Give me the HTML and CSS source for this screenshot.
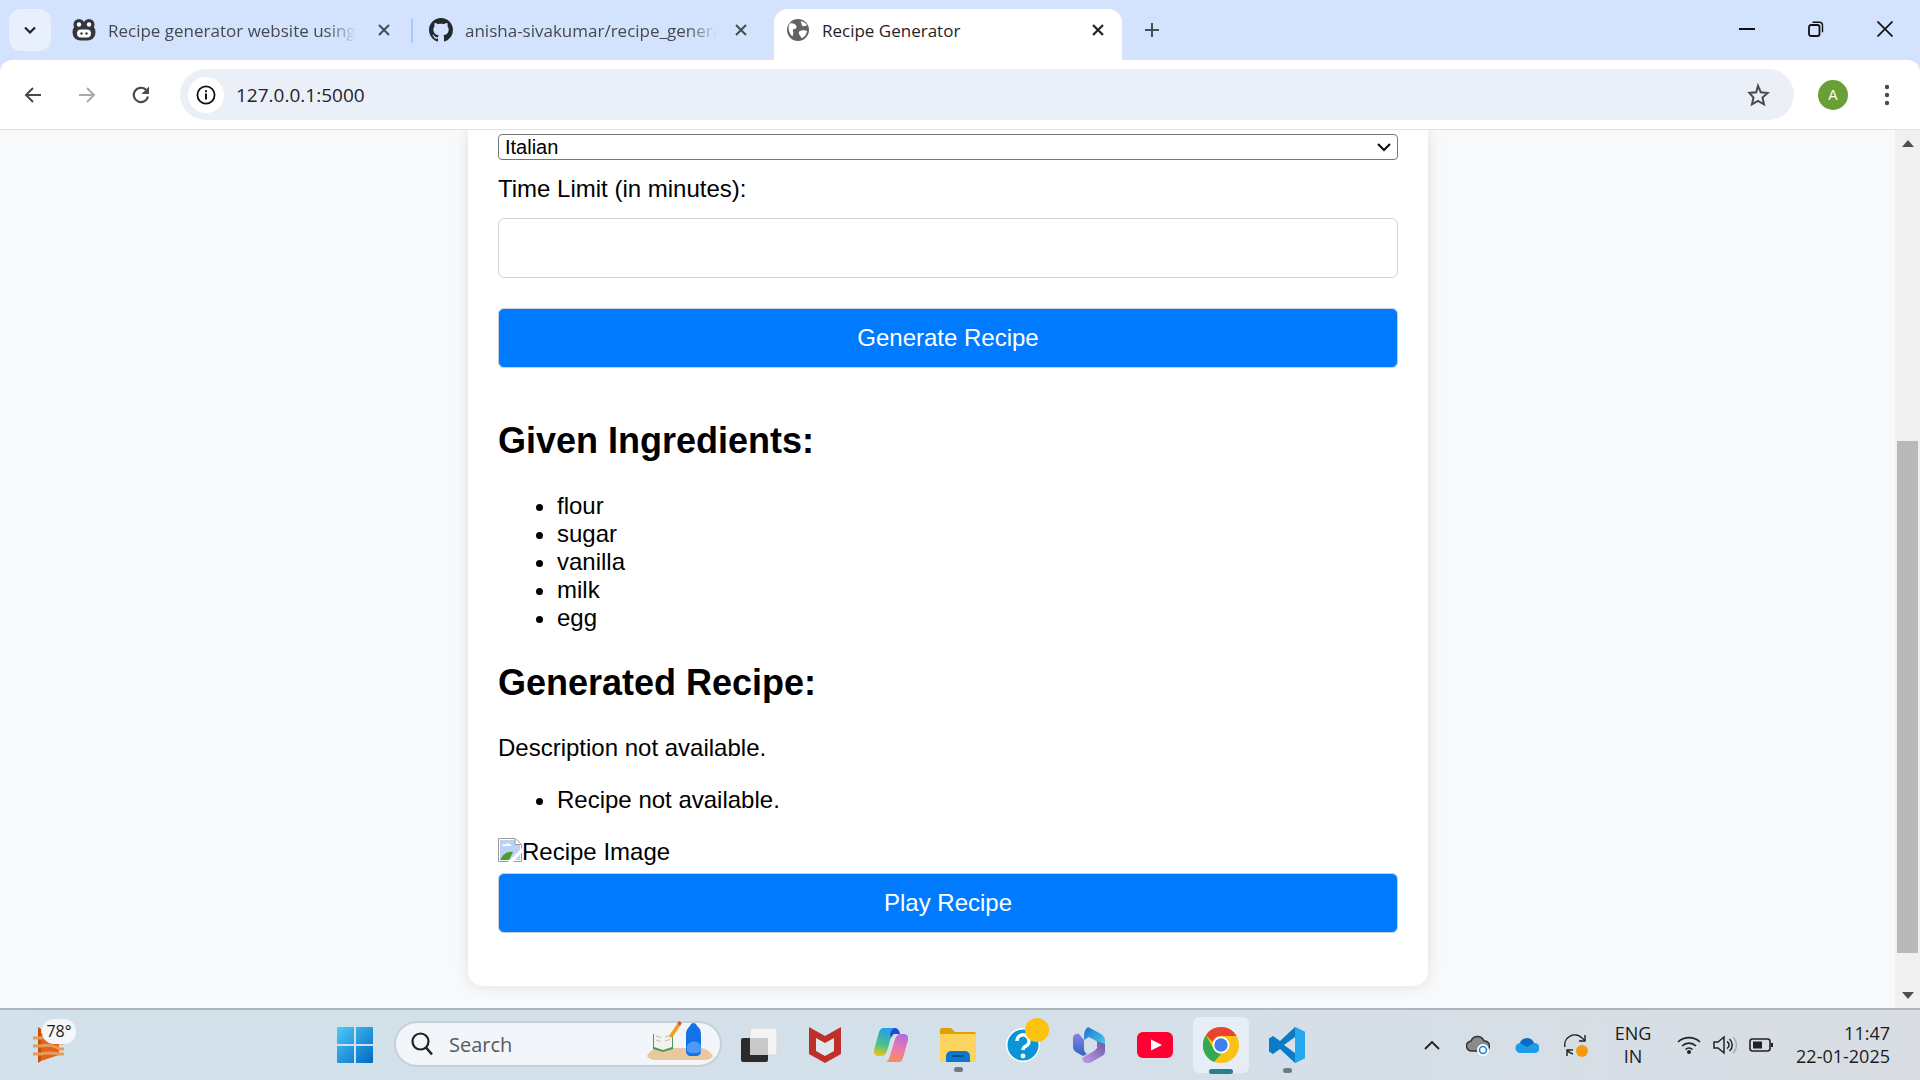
FILE: index.html
```html
<!DOCTYPE html>
<html lang="en">
<head>
  <meta charset="UTF-8" />
  <title>Recipe Generator</title>
  <link rel="stylesheet" href="styles.css">
</head>
<body>
  <div class="tabstrip">
    <div class="tab-search">
      <svg viewBox="0 0 16 16" width="16" height="16"><path d="M3 5.500l5 5 5-5" fill="none" stroke="#1f2328" stroke-width="2.200"/></svg>
    </div>
    <div class="tab tab-one">
      <svg class="favicon" viewBox="0 0 24 24"><circle cx="7" cy="6.500" r="5.500" fill="#34383e"/><circle cx="17" cy="6.500" r="5.500" fill="#34383e"/><rect x="0.500" y="6" width="23" height="16.500" rx="8" fill="#34383e"/><circle cx="7" cy="6.500" r="2.200" fill="#fff"/><circle cx="17" cy="6.500" r="2.200" fill="#fff"/><rect x="5" y="11.500" width="14" height="8" rx="4" fill="#fff"/><circle cx="9.500" cy="15.500" r="1.200" fill="#34383e"/><circle cx="14.500" cy="15.500" r="1.200" fill="#34383e"/></svg>
      <span class="tab-title fade">Recipe generator website using</span>
      <svg class="tab-close" viewBox="0 0 14 14"><path d="M2 2l10 10M12 2L2 12" stroke="#474b50" stroke-width="2"/></svg>
    </div>
    <div class="tab-sep"></div>
    <div class="tab tab-two">
      <svg class="favicon" viewBox="0 0 16 16"><path fill="#24292f" d="M8 0C3.580 0 0 3.580 0 8c0 3.540 2.290 6.530 5.470 7.590.4.070.55-.17.55-.38 0-.19-.01-.82-.01-1.490-2.010.37-2.530-.49-2.690-.94-.09-.23-.48-.94-.82-1.130-.28-.15-.68-.52-.01-.53.63-.01 1.080.58 1.230.82.72 1.210 1.870.87 2.330.66.07-.52.28-.87.51-1.070-1.780-.2-3.640-.89-3.640-3.950 0-.87.31-1.590.82-2.150-.08-.2-.36-1.020.08-2.120 0 0 .67-.21 2.200.82.64-.18 1.320-.27 2-.27s1.360.09 2 .27c1.530-1.040 2.200-.82 2.200-.82.44 1.100.16 1.920.08 2.120.51.56.82 1.270.82 2.150 0 3.070-1.870 3.750-3.650 3.950.29.25.54.73.54 1.480 0 1.070-.01 1.930-.01 2.200 0 .21.15.46.55.38A8.010 8.010 0 0 0 16 8c0-4.420-3.580-8-8-8z"/></svg>
      <span class="tab-title fade">anisha-sivakumar/recipe_genera</span>
      <svg class="tab-close" viewBox="0 0 14 14"><path d="M2 2l10 10M12 2L2 12" stroke="#474b50" stroke-width="2"/></svg>
    </div>
    <div class="tab tab-active">
      <svg class="favicon globe" viewBox="0 0 24 24"><circle cx="12" cy="12" r="12" fill="#5f6368"/><path d="M3 5c3-1 5 0 7 2 1 2 0 4-2 4s-2 2-1 4l-1 4C3 17 0 10 3 5zM15 2c2 1 5 2 7 5l-4 1c-2 0-2-2-3-6zM13 14c3-2 6-2 9-1-1 4-3 7-6 8-1-2-4-5-3-7z" fill="#fff"/></svg>
      <span class="tab-title">Recipe Generator</span>
      <svg class="tab-close" viewBox="0 0 14 14"><path d="M2 2l10 10M12 2L2 12" stroke="#1f2328" stroke-width="2.200"/></svg>
    </div>
    <svg class="new-tab" viewBox="0 0 16 16"><path d="M8 1v14M1 8h14" stroke="#474b50" stroke-width="2"/></svg>
    <div class="win-controls">
      <svg viewBox="0 0 16 16"><path d="M0 8h16" stroke="#111" stroke-width="2"/></svg>
      <svg viewBox="0 0 16 16"><rect x="1" y="4" width="10.500" height="11" rx="2" fill="none" stroke="#111" stroke-width="1.800"/><path d="M4.500 1.200h7a3 3 0 0 1 3 3v7" fill="none" stroke="#111" stroke-width="1.400"/></svg>
      <svg viewBox="0 0 16 16"><path d="M0.500 0.500l15 15M15.500 0.500l-15 15" stroke="#111" stroke-width="1.700"/></svg>
    </div>
  </div>

  <div class="toolbar">
    <svg class="nav-icon" viewBox="0 0 20 20"><path d="M18 10H3M10 3l-7 7 7 7" fill="none" stroke="#474b50" stroke-width="2"/></svg>
    <svg class="nav-icon" viewBox="0 0 20 20"><path d="M2 10h15M10 3l7 7-7 7" fill="none" stroke="#a8abaf" stroke-width="2"/></svg>
    <svg class="nav-icon" viewBox="0 0 20 20"><path d="M17 11.500A7.200 7.200 0 1 1 15 4.800" fill="none" stroke="#474b50" stroke-width="2.200"/><path d="M18 1.500v7.500h-7.500z" fill="#474b50"/></svg>
    <div class="omnibox">
      <div class="site-info">
        <svg viewBox="0 0 20 20" width="20" height="20"><circle cx="10" cy="10" r="8.600" fill="none" stroke="#111" stroke-width="1.800"/><rect x="9" y="8.500" width="2" height="6" fill="#111"/><rect x="9" y="5.200" width="2" height="2" fill="#111"/></svg>
      </div>
      <span class="url">127.0.0.1:5000</span>
      <svg class="star" viewBox="0 0 24 24"><path d="M12 2.800l2.800 6.400 6.900.7-5.200 4.600 1.500 6.800-6-3.500-6 3.500 1.500-6.800L3.300 9.900l6.900-.7z" fill="none" stroke="#474b50" stroke-width="2"/></svg>
    </div>
    <div class="avatar">A</div>
    <svg class="menu-dots" viewBox="0 0 6 24"><circle cx="3" cy="4" r="2.200" fill="#474b50"/><circle cx="3" cy="12" r="2.200" fill="#474b50"/><circle cx="3" cy="20" r="2.200" fill="#474b50"/></svg>
  </div>

  <div class="viewport">
    <main class="page">
      <div class="card">
        <div class="select-wrap">
          <select class="cuisine"><option>Italian</option></select>
          <svg viewBox="0 0 16 16"><path d="M2 5l6 6 6-6" fill="none" stroke="#111" stroke-width="2.200"/></svg>
        </div>
        <label class="field-label">Time Limit (in minutes):</label>
        <input class="field-input" type="text">
        <button class="btn btn-generate">Generate Recipe</button>

        <h2 class="section-title first">Given Ingredients:</h2>
        <ul class="list">
          <li>flour</li>
          <li>sugar</li>
          <li>vanilla</li>
          <li>milk</li>
          <li>egg</li>
        </ul>

        <h2 class="section-title">Generated Recipe:</h2>
        <p class="desc">Description not available.</p>
        <ul class="list list-steps">
          <li>Recipe not available.</li>
        </ul>
        <div class="broken-img">
          <svg viewBox="0 0 24 24" width="24" height="24"><path d="M0.500 0.500h17l6 6v17H0.500z" fill="#fff" stroke="#9c9c9c"/><path d="M2 2h15v5h5v15H2z" fill="#bcd2f5"/><path d="M4 8a2.500 2.500 0 0 1 3.500-1.500 3.500 3.500 0 0 1 6 1.500z" fill="#fff"/><path d="M2 22c3-6 8-9 13-8l-4 8z" fill="#4f9d2f"/><path d="M10 24L24 10v4.500L15 24z" fill="#fff"/><path d="M17 0.500v6h6" fill="#fff" stroke="#9c9c9c"/></svg>
          <span>Recipe Image</span>
        </div>
        <button class="btn">Play Recipe</button>
      </div>
    </main>
    <div class="scrollbar">
      <svg class="arrow" viewBox="0 0 12 8"><path d="M6 0l6 7H0z" fill="#505050"/></svg>
      <div class="track"><div class="thumb"></div></div>
      <svg class="arrow" viewBox="0 0 12 8"><path d="M6 7L0 0h12z" fill="#505050"/></svg>
    </div>
  </div>

  <footer class="taskbar">
    <div class="weather">
      <svg viewBox="0 0 31 36" width="31" height="36"><path d="M5 0l3 2v32l-3 2z" fill="#c9500f"/><path d="M8 6l18 7v15L8 34z" fill="#e0641c"/><path d="M0 11h8c6-2 14 0 19 5h4M0 19h8c6-2 14 0 19 3h4M0 27h8c6-2 12-1 18 0h5" fill="none" stroke="#e89a5a" stroke-width="3"/></svg>
      <span class="temp">78°</span>
    </div>

    <svg class="start" viewBox="0 0 36 36" width="36" height="36">
      <defs>
        <linearGradient id="winGrad" x1="0" y1="0" x2="1" y2="1"><stop offset="0" stop-color="#4cc9f8"/><stop offset="1" stop-color="#0269c4"/></linearGradient>
      </defs>
      <path d="M1 0h16v17H0V1a1 1 0 0 1 1-1zM19 0h16a1 1 0 0 1 1 1v16H19zM0 19h17v17H1a1 1 0 0 1-1-1zM19 19h17v16a1 1 0 0 1-1 1H19z" fill="url(#winGrad)"/>
    </svg>

    <div class="search">
      <svg viewBox="0 0 22 24" width="22" height="24"><circle cx="9.500" cy="9.500" r="8" fill="none" stroke="#222" stroke-width="2.200"/><path d="M15 15.500l6 7" stroke="#222" stroke-width="2.600"/></svg>
      <span class="search-text">Search</span>
      <svg class="search-art" viewBox="0 0 66 40" width="66" height="40"><path d="M0 35c4-7 8-8 14-8h38c6 0 10 2 14 8-3 4-6 4-12 4H12c-6 0-10 0-12-4z" fill="#e8c99b"/><path d="M6 13l10 2 10-3v16l-10 3-10-3z" fill="#4f9a55"/><path d="M7 11l9 2.500L25 10v16l-9 3-9-3z" fill="#f3f3ee"/><path d="M9 15l5 1.500M9 19l5 1.500M18 16l5-1.500M18 20l5-1.500" stroke="#b9bcc0"/><path d="M22 15l8-12 3 2-8 12z" fill="#f0a020"/><path d="M30 3l2-3 3 2-2 3z" fill="#e0503a"/><path d="M39 14c0-5 2-7 4-9 1-4 6-4 7 0 3 2 4 5 4 9v16c0 3-2 5-5 5h-5c-3 0-5-2-5-5z" fill="#1472e8"/><path d="M40 25c2-6 12-6 14 0v5c-3 3-11 3-14 0z" fill="#4b9bf5"/></svg>
    </div>

    <svg class="app app-files" viewBox="0 0 36 34" width="36" height="34"><rect x="9" y="0" width="27" height="27" rx="2" fill="#f4f4f4" stroke="#d5d5d5"/><rect x="0" y="10" width="27" height="24" rx="2" fill="#2b2b2b"/><rect x="9" y="10" width="18" height="17" fill="#c9c9c9"/></svg>

    <svg class="app app-mcafee" viewBox="0 0 32 36" width="32" height="36"><path d="M0 0l16 9 16-9v27l-16 9-16-9z" fill="#c0302b"/><path d="M7 11l9 5 9-5v13l-9 5-9-5z" fill="#dfe6ec"/></svg>

    <svg class="app app-copilot" viewBox="0 0 34 36" width="34" height="36">
      <defs>
        <linearGradient id="copA" x1="0.500" y1="0" x2="0.300" y2="1"><stop offset="0" stop-color="#2a9bea"/><stop offset="0.6" stop-color="#49c28a"/><stop offset="1" stop-color="#f2c21b"/></linearGradient>
        <linearGradient id="copB" x1="0.700" y1="0" x2="0.500" y2="1"><stop offset="0" stop-color="#b26ae0"/><stop offset="0.5" stop-color="#e678b0"/><stop offset="1" stop-color="#f58f5a"/></linearGradient>
      </defs>
      <path d="M25 35H12c2-1 3-3 4-6l5-17c1-3 3-5 6-5h3c3 0 5 3 4 6l-5 18c-1 2-2 4-4 4z" fill="url(#copB)"/>
      <path d="M9 1h13c-2 1-3 3-4 6l-5 17c-1 3-3 5-6 5H4c-3 0-5-3-4-6L5 5c1-2 2-4 4-4z" fill="url(#copA)"/>
      <path d="M20 1c3 0 5 1 6 6h-5c-2 0-3 2-4 4l-1-4c1-3 2-5 4-6z" fill="#1b4fd0"/>
    </svg>

    <div class="app app-explorer">
      <svg viewBox="0 0 36 34" width="36" height="34"><path d="M0 2a2 2 0 0 1 2-2h9l4 4h19a2 2 0 0 1 2 2v4H0z" fill="#e0a000"/><path d="M0 6h36v28H0z" fill="#fdd35f"/><path d="M6 34v-6a5 5 0 0 1 5-5h14a5 5 0 0 1 5 5v6z" fill="#0a78cf"/><rect x="12" y="27" width="12" height="2" fill="#064d8c"/></svg>
      <span class="run-dot"></span>
    </div>

    <div class="app app-help">
      <svg viewBox="0 0 34 36" width="34" height="36"><circle cx="17" cy="18" r="17" fill="#fff"/><circle cx="17" cy="18" r="15.500" fill="#0a96d6"/><path d="M11 14a6 6 0 1 1 9 5c-2 1-3 2-3 4" fill="none" stroke="#fff" stroke-width="3.500"/><circle cx="17" cy="29" r="2.400" fill="#fff"/></svg>
      <span class="help-badge"></span>
    </div>

    <svg class="app app-m365" viewBox="0 0 32 36" width="32" height="36">
      <defs>
        <linearGradient id="msA" x1="0" y1="0" x2="1" y2="1"><stop offset="0" stop-color="#1e6fd0"/><stop offset="1" stop-color="#45d4f0"/></linearGradient>
        <linearGradient id="msB" x1="0" y1="0" x2="0" y2="1"><stop offset="0" stop-color="#8d7fe0"/><stop offset="1" stop-color="#2c66c4"/></linearGradient>
        <linearGradient id="msC" x1="1" y1="0" x2="0" y2="1"><stop offset="0" stop-color="#6d5aa8"/><stop offset="1" stop-color="#c79be8"/></linearGradient>
      </defs>
      <path d="M15 0l13 7c3 2 4 4 4 7v5L16 10l-5 3c0-6 0-10 4-13z" fill="url(#msA)"/>
      <path d="M0 11c0-3 3-5 6-4l5 6v8c0 3 1 5 3 6l-4 2-7-4c-2-1-3-3-3-6z" fill="url(#msB)"/>
      <path d="M32 17v7c0 3-1 4-3 5l-12 7c-3 1-5 0-7-2l-1-3 12-7 3-3v-7z" fill="url(#msC)"/>
    </svg>

    <svg class="app app-yt" viewBox="0 0 36 26" width="36" height="26"><rect width="36" height="26" rx="6" fill="#ff0033"/><path d="M14 7.500l11 5.500-11 5.500z" fill="#fff"/></svg>

    <div class="app app-chrome">
      <svg viewBox="0 0 36 36" width="36" height="36"><circle cx="18" cy="18" r="18" fill="#fbc116"/><path d="M18 0a18 18 0 0 1 15.600 9H18a9 9 0 0 0-8.400 5.700L2.900 8.200A18 18 0 0 1 18 0z" fill="#ea4335"/><path d="M2.900 8.200l7.500 13a9 9 0 0 0 7.600 5.800L11 35A18 18 0 0 1 2.900 8.200z" fill="#34a853"/><circle cx="18" cy="18" r="8.500" fill="#fff"/><circle cx="18" cy="18" r="6.700" fill="#3f7fee"/></svg>
      <span class="run-bar"></span>
    </div>

    <div class="app app-vscode">
      <svg viewBox="0 0 36 36" width="36" height="36"><path d="M26 0l10 5v26l-10 5-15-14-7 5-4-2.500V11.500L4 9l7 5z" fill="#0a7bc4"/><path d="M26 10L15 18l11 8z" fill="#d6e2ec"/><path d="M26 0l10 5v26l-10 5z" fill="#24a9f1"/></svg>
      <span class="run-dot"></span>
    </div>

    <div class="tray">
      <svg class="tray-caret" viewBox="0 0 16 10" width="16" height="10"><path d="M1 9l7-7 7 7" fill="none" stroke="#222" stroke-width="1.800"/></svg>
      <svg viewBox="0 0 24 22" width="24" height="22"><path d="M6 17a5 5 0 0 1-1-10 7 7 0 0 1 13 0 5 5 0 0 1 1 10z" fill="#8a8a8a" stroke="#333" stroke-width="1.500"/><circle cx="17" cy="16" r="6" fill="#fff"/><circle cx="17" cy="16" r="3.500" fill="none" stroke="#1c7ed6" stroke-width="1.500"/></svg>
      <svg viewBox="0 0 24 16" width="24" height="16"><path d="M6 16a5 5 0 0 1-1-10 7.500 7.500 0 0 1 14 0 5 5 0 0 1 1 10z" fill="#1f9bea"/><path d="M5 6a7.500 7.500 0 0 1 14 0l-7 4z" fill="#0a6cc4"/></svg>
      <svg viewBox="0 0 24 24" width="24" height="24"><path d="M1 14a10 10 0 0 1 17-9l3 2.500M3 23v-6h6M3 17a10 10 0 0 0 6 4" fill="none" stroke="#222" stroke-width="1.400"/><path d="M21 2v6h-6" fill="none" stroke="#222" stroke-width="1.400"/><circle cx="18" cy="18" r="6" fill="#f59a0c"/></svg>
      <div class="lang"><span>ENG</span><span>IN</span></div>
      <svg viewBox="0 0 24 18" width="24" height="18"><path d="M1 6a16 16 0 0 1 22 0M5 10a10 10 0 0 1 14 0M8.500 13.500a5 5 0 0 1 7 0" fill="none" stroke="#222" stroke-width="1.600"/><circle cx="12" cy="16" r="2" fill="#222"/></svg>
      <svg class="tray-near" viewBox="0 0 24 20" width="24" height="20"><path d="M1 7h4l6-5v16l-6-5H1z" fill="none" stroke="#222" stroke-width="1.500"/><path d="M14 6.500a4 4 0 0 1 0 7M16.500 4a8 8 0 0 1 0 12" fill="none" stroke="#222" stroke-width="1.500"/><path d="M20 2a11 11 0 0 1 0 16" fill="none" stroke="#aab" stroke-width="1.500"/></svg>
      <svg class="tray-near" viewBox="0 0 24 14" width="24" height="14"><rect x="1" y="1" width="20" height="12" rx="2.500" fill="none" stroke="#222" stroke-width="1.600"/><rect x="4" y="3.500" width="9" height="7" fill="#222"/><rect x="22" y="5" width="2" height="4" fill="#222"/></svg>
      <div class="clock"><span>11:47</span><span>22-01-2025</span></div>
    </div>
  </footer>
</body>
</html>
```

FILE: styles.css
```css
* {
  box-sizing: border-box;
}

html, body {
  margin: 0;
  height: 100%;
}

body {
  width: 1920px;
  height: 1080px;
  display: flex;
  flex-direction: column;
  overflow: hidden;
  font-family: "Liberation Sans", Arial, sans-serif;
  background: #d3e3fd;
}

svg {
  display: block;
  flex: none;
}

/* browser tabs */
.tabstrip {
  height: 60px;
  flex: none;
  display: flex;
  align-items: flex-start;
  background: #d3e3fd;
  font-family: "Open Sans", sans-serif;
}

.tab-search {
  width: 42px;
  height: 42px;
  margin: 9px 0 0 9px;
  display: flex;
  align-items: center;
  justify-content: center;
  background: #e9f0fd;
  border-radius: 12px;
}

.tab {
  height: 51px;
  margin-top: 9px;
  display: flex;
  align-items: center;
  flex: none;
  padding-bottom: 9px;
}

.favicon {
  width: 24px;
  height: 24px;
}

.tab-title {
  font-size: 17px;
  color: #45494e;
  white-space: nowrap;
}

.fade {
  -webkit-mask-image: linear-gradient(to right, #000 88%, transparent);
  mask-image: linear-gradient(to right, #000 88%, transparent);
}

.tab-close {
  width: 14px;
  height: 14px;
}

.tab-one {
  width: 340px;
  margin-left: 21px;
}

.tab-one .tab-title {
  width: 248px;
  margin-left: 12px;
}

.tab-one .tab-close {
  margin-left: 21px;
}

.tab-sep {
  width: 2px;
  height: 24px;
  margin: 19px 0 0 -1px;
  background: #a8c7fa;
}

.tab-two {
  width: 344px;
  margin-left: 16px;
}

.tab-two .tab-title {
  width: 252px;
  margin-left: 12px;
}

.tab-two .tab-close {
  margin-left: 17px;
}

.tab-active {
  width: 348px;
  margin-left: 1px;
  padding-left: 13px;
  background: #fff;
  border-radius: 14px 14px 0 0;
}

.globe {
  width: 22px;
  height: 22px;
}

.tab-active .tab-title {
  width: 269px;
  margin-left: 13px;
  color: #1f2328;
}

.new-tab {
  width: 16px;
  height: 16px;
  margin: 22px 0 0 22px;
}

.win-controls {
  margin: 21px 27px 0 auto;
  display: flex;
  gap: 53px;
}

.win-controls svg {
  width: 16px;
  height: 16px;
}

/* address bar */
.toolbar {
  height: 70px;
  flex: none;
  display: flex;
  align-items: center;
  background: #fff;
  border-radius: 12px 12px 0 0;
  border-bottom: 1px solid #e1e3e6;
  padding-left: 23px;
}

.nav-icon {
  width: 20px;
  height: 20px;
  margin-right: 34px;
}

.nav-icon:nth-child(3) {
  margin-right: 29px;
}

.omnibox {
  width: 1614px;
  height: 51px;
  display: flex;
  align-items: center;
  background: #ebf0f8;
  border-radius: 26px;
  padding: 0 24px 0 8px;
}

.site-info {
  width: 36px;
  height: 36px;
  display: flex;
  align-items: center;
  justify-content: center;
  background: #fff;
  border-radius: 50%;
}

.url {
  margin-left: 12px;
  font-family: "Open Sans", sans-serif;
  font-size: 19px;
  color: #1f2328;
}

.star {
  width: 24px;
  height: 24px;
  margin-left: auto;
}

.avatar {
  width: 30px;
  height: 30px;
  margin-left: 24px;
  border-radius: 50%;
  background: #6a9f37;
  color: #fff;
  font-size: 14px;
  line-height: 30px;
  text-align: center;
}

.menu-dots {
  width: 6px;
  height: 24px;
  margin-left: 36px;
}

/* page */
.viewport {
  flex: 1;
  min-height: 0;
  display: flex;
  background: #f8f9fa;
  border-bottom: 2px solid #aeb6bc;
}

.page {
  flex: 1;
  overflow: hidden;
}

.card {
  width: 960px;
  height: 856px;
  margin-left: 468px;
  padding: 4px 30px 0;
  background: #fff;
  border-radius: 0 0 15px 15px;
  box-shadow: 0 0 15px rgba(0, 0, 0, 0.1);
}

.select-wrap {
  position: relative;
}

.select-wrap svg {
  position: absolute;
  right: 6px;
  top: 5px;
  width: 16px;
  height: 16px;
}

.cuisine {
  display: block;
  width: 100%;
  height: 26px;
  padding: 0 6px;
  appearance: none;
  background: #fff;
  border: 1.5px solid #767676;
  border-radius: 4px;
  font: 20px "Liberation Sans", Arial, sans-serif;
  color: #000;
}

.field-label {
  display: block;
  margin-top: 15px;
  font-size: 24px;
  line-height: 28px;
}

.field-input {
  display: block;
  width: 100%;
  height: 60px;
  margin-top: 15px;
  border: 1.5px solid #ced4da;
  border-radius: 6px;
}

.btn {
  display: block;
  width: 100%;
  height: 60px;
  background: #007bff;
  border: 1px solid #c7d0da;
  border-radius: 6px;
  color: #fff;
  font: 24px "Liberation Sans", Arial, sans-serif;
}

.btn-generate {
  margin-top: 30px;
}

.section-title {
  margin: 30px 0 31px;
  font-size: 36px;
  line-height: 41px;
}

.section-title.first {
  margin-top: 52px;
  margin-bottom: 30px;
}

.list {
  margin: 31px 0 24px;
  padding-left: 59px;
  font-size: 24px;
  line-height: 28px;
}

.desc {
  margin: 0;
  font-size: 24px;
  line-height: 28px;
}

.list-steps {
  margin: 24px 0;
}

.broken-img {
  display: flex;
  align-items: center;
  height: 28px;
  margin-bottom: 7px;
  font-size: 24px;
}

.broken-img svg {
  margin-top: -5px;
}

/* scrollbar */
.scrollbar {
  width: 25px;
  flex: none;
  display: flex;
  flex-direction: column;
  align-items: center;
  background: #f0f0f0;
  padding: 10px 0 8px;
}

.arrow {
  width: 12px;
  height: 8px;
}

.track {
  flex: 1;
  align-self: stretch;
  position: relative;
}

.thumb {
  position: absolute;
  left: 2px;
  right: 2px;
  top: 293px;
  height: 512px;
  background: #b9b9b9;
}

/* windows taskbar */
.taskbar {
  height: 70px;
  flex: none;
  display: flex;
  align-items: center;
  background: linear-gradient(to right, #d2e1eb, #d4dfe9 60%, #d9dde3);
  color: #1b1b1b;
}

.weather {
  position: relative;
  width: 31px;
  height: 36px;
  margin-left: 33px;
}

.temp {
  position: absolute;
  left: 9px;
  top: -8px;
  width: 34px;
  height: 25px;
  background: #f4f6f7;
  border-radius: 12px;
  font: 16px/25px "Open Sans", sans-serif;
  text-align: center;
}

.start {
  margin-left: 273px;
}

.search {
  width: 328px;
  height: 46px;
  margin: -2px 0 0 21px;
  display: flex;
  align-items: center;
  padding: 0 7px 0 15px;
  background: #f2f5f9;
  border: 2px solid #c6d0da;
  border-radius: 23px;
}

.search-text {
  margin-left: 16px;
  font: 20px "Open Sans", sans-serif;
  color: #55595e;
}

.search-art {
  margin-left: auto;
  margin-top: -6px;
}

.app {
  position: relative;
  flex: none;
}

.app-files {
  margin-left: 19px;
}

.app-mcafee {
  margin-left: 32px;
}

.app-copilot {
  margin-left: 33px;
}

.app-explorer {
  margin-left: 32px;
}

.app-help {
  margin-left: 30px;
}

.app-m365 {
  margin-left: 33px;
}

.app-yt {
  margin-left: 32px;
}

.app-chrome {
  width: 56px;
  height: 56px;
  margin-left: 20px;
  padding: 10px;
  background: #e6edf4;
  border-radius: 6px;
}

.app-vscode {
  margin-left: 20px;
}

.run-dot {
  position: absolute;
  left: 50%;
  bottom: -10px;
  width: 9px;
  height: 5px;
  margin-left: -4px;
  background: #6e7a84;
  border-radius: 3px;
}

.run-bar {
  position: absolute;
  left: 16px;
  bottom: -1px;
  width: 24px;
  height: 5px;
  background: #25808f;
  border-radius: 3px;
}

.help-badge {
  position: absolute;
  left: 19px;
  top: -9px;
  width: 24px;
  height: 24px;
  background: #fcc20d;
  border-radius: 50%;
}

.tray {
  flex: 1;
  display: flex;
  align-items: center;
  padding-right: 30px;
}

.tray svg {
  margin-left: 25px;
}

.tray .tray-caret {
  margin-left: 119px;
}

.tray .tray-caret + svg {
  margin-left: 26px;
}

.lang {
  display: flex;
  flex-direction: column;
  align-items: center;
  margin-left: 28px;
  width: 34px;
  font: 18px/23px "Open Sans", sans-serif;
}

.tray .lang + svg {
  margin-left: 27px;
}

.tray .tray-near {
  margin-left: 12px;
}

.clock {
  margin-left: auto;
  display: flex;
  flex-direction: column;
  align-items: flex-end;
  white-space: nowrap;
  font: 18px/23px "Open Sans", sans-serif;
}
```
